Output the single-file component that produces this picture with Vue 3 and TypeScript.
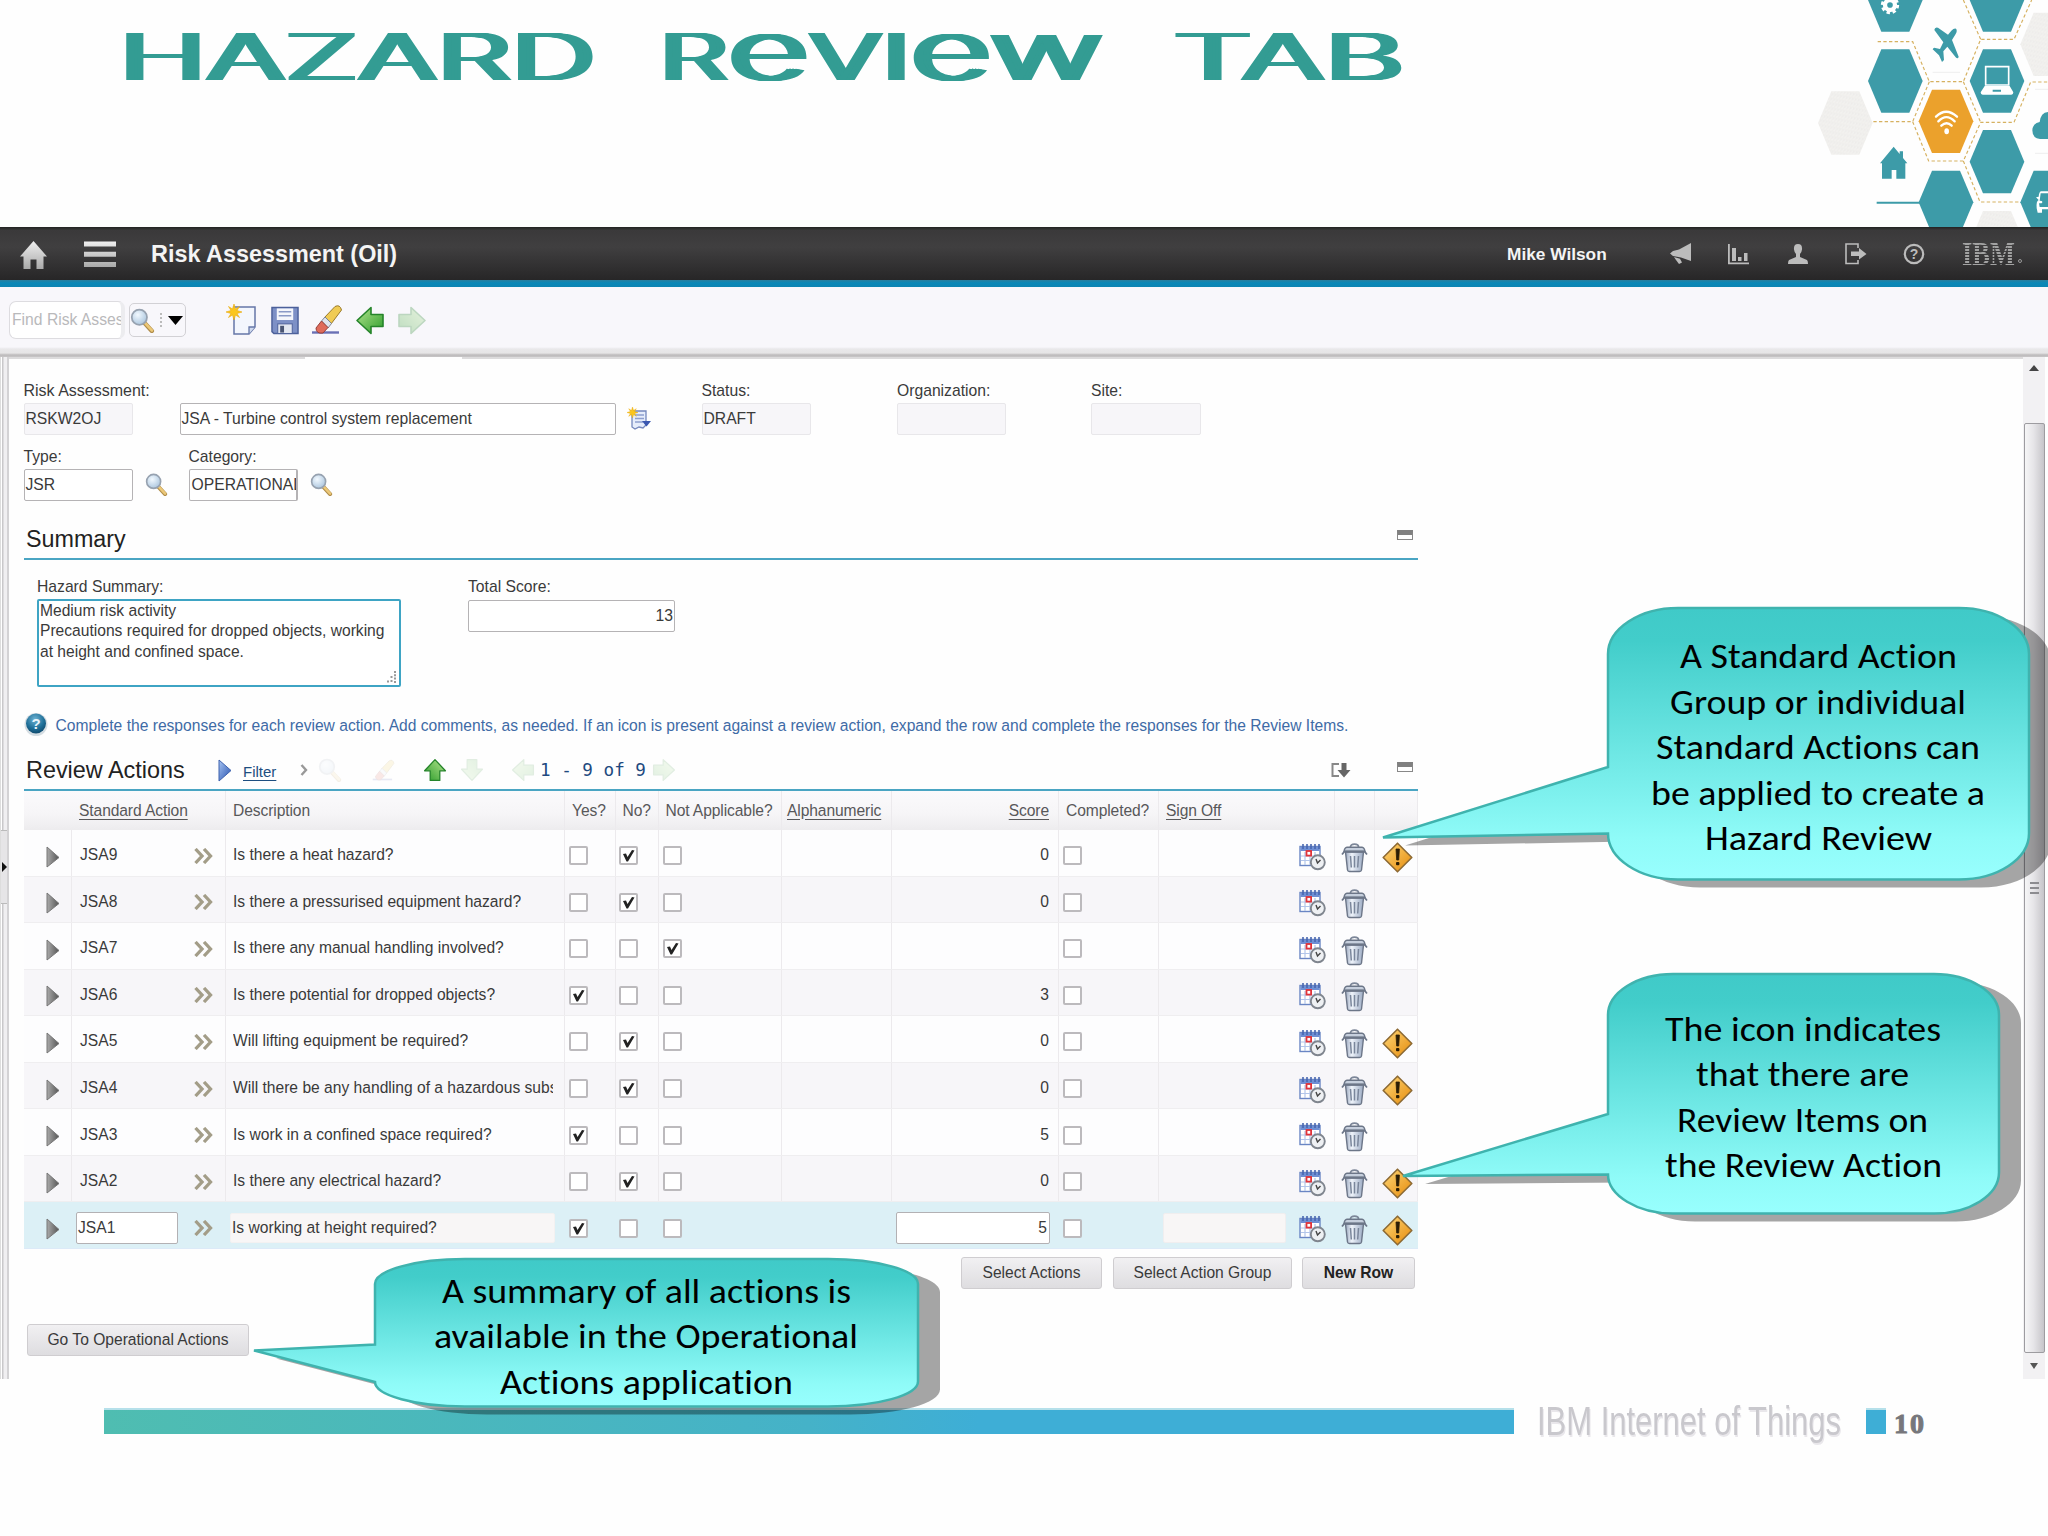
<script setup lang="ts">
interface Row {
  id: string
  desc: string
  answer: 'yes' | 'no' | 'na'
  score: string
  warn: boolean
  active?: boolean
}

const rows: Row[] = [
  { id: 'JSA9', desc: 'Is there a heat hazard?', answer: 'no', score: '0', warn: true },
  { id: 'JSA8', desc: 'Is there a pressurised equipment hazard?', answer: 'no', score: '0', warn: false },
  { id: 'JSA7', desc: 'Is there any manual handling involved?', answer: 'na', score: '', warn: false },
  { id: 'JSA6', desc: 'Is there potential for dropped objects?', answer: 'yes', score: '3', warn: false },
  { id: 'JSA5', desc: 'Will lifting equipment be required?', answer: 'no', score: '0', warn: true },
  { id: 'JSA4', desc: 'Will there be any handling of a hazardous substance?', answer: 'no', score: '0', warn: true },
  { id: 'JSA3', desc: 'Is work in a confined space required?', answer: 'yes', score: '5', warn: false },
  { id: 'JSA2', desc: 'Is there any electrical hazard?', answer: 'no', score: '0', warn: true },
  { id: 'JSA1', desc: 'Is working at height required?', answer: 'yes', score: '5', warn: true, active: true },
]
const answers = ['yes', 'no', 'na'] as const

function hex(cx: number, cy: number): string {
  return [[-82, 0], [-42, -95], [42, -95], [82, 0], [42, 95], [-42, 95]]
    .map(([x, y]) => `${cx + x},${cy + y}`)
    .join(' ')
}
const tealHexes = [[346, 0], [346, 243], [651, 0], [651, 243], [651, 485], [498, 607], [803, 607]]
const paleHexes = [[196, 369], [803, 133], [651, 728]]

interface Line { t: string; x: number; w: number; y: number }
interface Callout {
  l: number; r: number; t: number; b: number; rx: number; ry: number
  tail: [number, number, number, number]
  lines: Line[]
}
const callouts: Callout[] = [
  {
    l: 1608, r: 2029, t: 608, b: 879.5, rx: 70, ry: 46, tail: [767, 1383, 837.5, 833.5],
    lines: [
      { t: 'A Standard Action', x: 1680, w: 277, y: 668 },
      { t: 'Group or individual', x: 1670, w: 296, y: 713.5 },
      { t: 'Standard Actions can', x: 1656, w: 324, y: 759 },
      { t: 'be applied to create a', x: 1651, w: 334, y: 804.5 },
      { t: 'Hazard Review', x: 1705, w: 227, y: 850 },
    ],
  },
  {
    l: 1608, r: 1999, t: 974, b: 1213.5, rx: 65, ry: 41, tail: [1114, 1403, 1176, 1174.5],
    lines: [
      { t: 'The icon indicates', x: 1665, w: 276, y: 1040.5 },
      { t: 'that there are', x: 1696, w: 213, y: 1086 },
      { t: 'Review Items on', x: 1677, w: 251, y: 1131.5 },
      { t: 'the Review Action', x: 1665, w: 277, y: 1177 },
    ],
  },
  {
    l: 375, r: 918, t: 1259, b: 1406.5, rx: 90, ry: 25, tail: [1344.5, 254, 1350.5, 1382],
    lines: [
      { t: 'A summary of all actions is', x: 442, w: 409, y: 1302.5 },
      { t: 'available in the Operational', x: 434, w: 424, y: 1348 },
      { t: 'Actions application', x: 500, w: 293, y: 1394 },
    ],
  },
]

/* Rounded box outline with a pointed tail on its left edge. */
function bubble(c: Callout): string {
  const [y1, tx, ty, y2] = c.tail
  const kx = c.rx * 0.45
  const ky = c.ry * 0.45
  const low = Math.max(y2, c.b - c.ry)
  return `M${c.l} ${c.t + c.ry}C${c.l} ${c.t + ky} ${c.l + kx} ${c.t} ${c.l + c.rx} ${c.t}`
    + `H${c.r - c.rx}C${c.r - kx} ${c.t} ${c.r} ${c.t + ky} ${c.r} ${c.t + c.ry}`
    + `V${c.b - c.ry}C${c.r} ${c.b - ky} ${c.r - kx} ${c.b} ${c.r - c.rx} ${c.b}`
    + `H${c.l + c.rx}C${c.l + kx} ${c.b} ${c.l} ${c.b - ky} ${c.l} ${low}`
    + `L${c.l} ${y2}L${tx} ${ty}L${c.l} ${y1}Z`
}
</script>

<template>
  <div class="slide">
    <svg class="defs" width="0" height="0">
      <defs>
        <linearGradient id="gGreen" x1="0" y1="0" x2="1" y2="1"><stop offset="0" stop-color="#b5e58f" /><stop offset="1" stop-color="#2c9c2a" /></linearGradient>
        <linearGradient id="gSteel" x1="0" y1="0" x2="1" y2="0"><stop offset="0" stop-color="#9aa7be" /><stop offset=".35" stop-color="#eef3fa" /><stop offset="1" stop-color="#9aa9c2" /></linearGradient>
        <linearGradient id="gAmber" x1="0" y1="0" x2="1" y2="1"><stop offset="0" stop-color="#ffd879" /><stop offset="1" stop-color="#e58a0a" /></linearGradient>
        <linearGradient id="gGrey" x1="0" y1="0" x2="1" y2="0"><stop offset="0" stop-color="#aaa" /><stop offset="1" stop-color="#555" /></linearGradient>
        <linearGradient id="gBlue" x1="0" y1="0" x2="1" y2="1"><stop offset="0" stop-color="#a9c6f3" /><stop offset="1" stop-color="#234fae" /></linearGradient>
        <linearGradient id="gSilver" x1="0" y1="0" x2="0" y2="1"><stop offset="0" stop-color="#efefef" /><stop offset="1" stop-color="#a9a9a9" /></linearGradient>
        <linearGradient id="gCall" x1="0" y1="0" x2="0" y2="1"><stop offset="0" stop-color="#40cac8" /><stop offset=".12" stop-color="#42cdca" /><stop offset=".85" stop-color="#8ffbf8" /><stop offset="1" stop-color="#98fffe" /></linearGradient>
        <radialGradient id="gLens" cx=".4" cy=".35" r=".7"><stop offset="0" stop-color="#f2f9ff" /><stop offset="1" stop-color="#a9c4dd" /></radialGradient>
        <radialGradient id="gHelp" cx=".45" cy=".3" r=".75"><stop offset="0" stop-color="#6fb4d4" /><stop offset=".6" stop-color="#1f6f98" /><stop offset="1" stop-color="#0d4466" /></radialGradient>
        <pattern id="pGrain" width="9" height="14" patternUnits="userSpaceOnUse" patternTransform="rotate(12)"><rect width="9" height="14" fill="#f3f2f0" /><path d="M2 0l2 7-2 7M7 2l-1 8" stroke="#e6e4e1" stroke-width="1.3" fill="none" /></pattern>
      </defs>
      <symbol id="lens" viewBox="0 0 24 24">
        <path d="M14 14.500L21 22" stroke="#b08d4b" stroke-width="4.200" stroke-linecap="round" />
        <path d="M14.500 14.500L21 21.500" stroke="#ecc878" stroke-width="2.600" stroke-linecap="round" />
        <circle cx="9" cy="8.800" r="7.300" fill="url(#gLens)" stroke="#97a2b0" stroke-width="1.700" />
      </symbol>
      <symbol id="arrowL" viewBox="0 0 30 30">
        <path d="M2 15L16 2V9H28V21H16V28Z" fill="url(#gGreen)" stroke="#25842a" stroke-width="1.600" stroke-linejoin="round" />
      </symbol>
      <symbol id="eraser" viewBox="0 0 32 32">
        <path d="M1 28.500H28" stroke="#6a70b5" stroke-width="2.400" />
        <path d="M13 14L24 2.500Q29 0 30.500 6L20 20Z" fill="#f0cb55" stroke="#9a7a2c" stroke-width="1" />
        <path d="M10.500 17L14 13L20.500 19.500L17 24Z" fill="#dfe4ee" stroke="#7d8595" stroke-width="1" />
        <path d="M5 24L10.500 17L17 23.500L12 29Q5 30 5 24Z" fill="#df6b5b" stroke="#96403a" stroke-width="1" />
      </symbol>
      <symbol id="calendar" viewBox="0 0 27 28">
        <rect x="1" y="3.500" width="20" height="19" fill="#fff" stroke="#6a86c4" stroke-width="1.400" />
        <path d="M1.500 4H20.500V8H1.500Z" fill="#6f8fd4" />
        <path d="M4 1V6M8 1V6M12 1V6M16 1V6M20 1V6" stroke="#4766b0" stroke-width="1.600" />
        <path d="M2 13H20M2 17.500H20M6 9V22M11 9V22M16 9V22" stroke="#b3c6ea" stroke-width="1.200" />
        <rect x="7.500" y="8" width="4.600" height="4.600" fill="#fff" stroke="#e0343a" stroke-width="1.800" />
        <circle cx="18.800" cy="19.300" r="7" fill="#eef0f3" stroke="#7f858e" stroke-width="1.900" />
        <path d="M17 16L18.500 20L21.500 17" stroke="#444" stroke-width="1.400" fill="none" />
      </symbol>
      <symbol id="trash" viewBox="0 0 27 30">
        <path d="M9.500 4Q9.500 1.200 13.500 1.200T17.500 4" fill="none" stroke="#7d8799" stroke-width="1.800" />
        <path d="M4.500 9H22.500L20.500 27Q20.300 28.500 18.500 28.500H8.500Q6.700 28.500 6.500 27Z" fill="url(#gSteel)" stroke="#6c7688" stroke-width="1.400" />
        <path d="M3 8.500Q3.500 4.500 6 4.200H21Q23.500 4.500 24 8.500Z" fill="#c6cfdd" stroke="#6c7688" stroke-width="1.400" />
        <path d="M1 11.500L3.500 8.500H23.500L26 11.500" fill="none" stroke="#6c7688" stroke-width="1.800" />
        <path d="M9.500 13L10.300 24.500M13.500 13V24.500M17.500 13L16.700 24.500" stroke="#7a869b" stroke-width="1.500" />
      </symbol>
      <symbol id="warn" viewBox="0 0 31 31">
        <path d="M15.500 1.200L29.800 15.500L15.500 29.800L1.200 15.500Z" fill="url(#gAmber)" stroke="#8d6a34" stroke-width="1.600" stroke-linejoin="round" />
        <path d="M14 7H17.400L16.700 18H14.700Z" fill="#2b1d05" stroke="#2b1d05" stroke-width=".8" /><rect x="14" y="20" width="3.400" height="3.300" rx="1" fill="#2b1d05" />
      </symbol>
      <symbol id="star" viewBox="0 0 16 16"><path d="M8 0L9.500 5L13.500 2.500L11 6.500L16 8L11 9.500L13.500 13.500L9.500 11L8 16L6.500 11L2.500 13.500L5 9.500L0 8L5 6.500L2.500 2.500L6.500 5Z" fill="#fbc61d" stroke="#e9a90c" stroke-width=".6" /></symbol>
    </svg>

    <header class="banner">
      <svg class="title" width="1440" height="110" viewBox="0 0 1440 110">
        <text x="115" y="80" textLength="476" lengthAdjust="spacingAndGlyphs">HAZARD</text>
        <text x="655" y="80" textLength="444" lengthAdjust="spacingAndGlyphs">R<tspan class="tall">e</tspan>VI<tspan class="tall">ew</tspan></text>
        <text x="1169" y="80" textLength="231" lengthAdjust="spacingAndGlyphs">TAB</text>
      </svg>
      <svg class="hexes" width="268" height="227" viewBox="0 0 804 681">
        <polygon v-for="(h, i) in paleHexes" :key="'p' + i" :points="hex(h[0], h[1])" fill="url(#pGrain)" />
        <path d="M458 217H540M765 268H804M765 460H804" stroke="#eee" stroke-width="3" />
        <polygon v-for="(h, i) in tealHexes" :key="i" :points="hex(h[0], h[1])" fill="#3d9ba8" />
        <polygon :points="hex(498, 364)" fill="#eba12c" />
        <g fill="none" stroke="#d6b160" stroke-width="3.500" stroke-dasharray="10 7">
          <path d="M293 125H398L448 245H550L602 118H702L755 0" />
          <path d="M550 0L602 118M448 245L398 365H275" />
          <path d="M398 365L446 483H550L602 367H702L752 246H804" />
          <path d="M550 245L602 367M550 483L600 606H722" />
        </g>
        <path d="M290 608H420" stroke="#3d9ba8" stroke-width="6" />
        <circle cx="330" cy="15" r="15" fill="none" stroke="#fff" stroke-width="13" />
        <circle cx="330" cy="15" r="23" fill="none" stroke="#fff" stroke-width="9" stroke-dasharray="10 8.060" />
        <path d="M528 86Q533 92 527 102L516 120L536 170Q534 178 527 172L502 140L490 154L492 180L486 186L477 166L458 148Q460 142 466 144L480 147L490 127L463 90Q464 80 474 83L504 104L514 92Q522 84 528 86Z" fill="#3d9ba8" />
        <path d="M617 200H686V255H617Z" fill="none" stroke="#fff" stroke-width="5" />
        <path d="M614 258H689L700 277Q700 284 694 284H608Q602 284 602 277ZM638 269V275H663V269Z" fill="#fff" fill-rule="evenodd" />
        <g fill="none" stroke="#fff" stroke-width="7" stroke-linecap="round">
          <path d="M468 350Q498 320 531 350" /><path d="M475 364Q499 339 524 364" /><path d="M484 377Q500 362 515 377" />
        </g>
        <ellipse cx="500" cy="394" rx="7" ry="9" fill="#fff" />
        <path d="M300 490L341 440L359 462V454H369V474L382 490H376V536H349V510H335V536H306V490Z" fill="#3d9ba8" />
        <path d="M804 336Q782 338 779 366Q758 370 757 391Q758 416 780 417H804Z" fill="#3d9ba8" />
        <path d="M804 574H783Q777 576 776 590L768 592L776 600Q768 603 770 625L773 638H786V628H804V621H779L777 610H785Q790 606 785 603L779 602L782 580H804Z" fill="#fff" />
      </svg>
    </header>

    <nav class="topbar">
      <svg class="home" width="27" height="29" viewBox="0 0 27 29"><path d="M13.500 0L27 15.500H23.500V28H16.500V18.500H10.500V28H3.500V15.500H0Z" fill="url(#gSilver)" /></svg>
      <svg class="burger" width="32" height="27" viewBox="0 0 32 27"><path d="M0 .5H32V5.500H0ZM0 10.700H32V15.700H0ZM0 21H32V26H0Z" fill="url(#gSilver)" /></svg>
      <span class="app">Risk Assessment (Oil)</span>
      <span class="user">Mike Wilson</span>
      <div class="navicons">
        <svg width="22" height="22" viewBox="0 0 22 22" fill="#bcbcbc"><path d="M21 0V18L11 14.500L3 13L0 10.500L3 8L9 6.500ZM4 14L10 15.800L12 19.500L9 21L6 17Z" /></svg>
        <svg width="22" height="22" viewBox="0 0 22 22" fill="#bcbcbc"><path d="M0 1H1.800V19.500H21V21.200H0ZM4 5H8V18H4ZM10 14H13.500V18H10ZM16 10H19.500V18H16Z" /></svg>
        <svg width="22" height="22" viewBox="0 0 22 22" fill="#bcbcbc"><path d="M11 1Q15.500 1 15 6.500Q14.500 10 13 11V14L20 17Q21 18 21 21H1Q1 18 2 17L9 14V11Q7.500 10 7 6.500Q6.500 1 11 1Z" /></svg>
        <svg width="22" height="22" viewBox="0 0 22 22"><path d="M13 5V1H1V20.500H13V17" fill="none" stroke="#bcbcbc" stroke-width="1.600" /><path d="M6 8.500H14V5L21.500 11L14 16.500V13H6Z" fill="#bcbcbc" /></svg>
        <svg width="22" height="22" viewBox="0 0 22 22"><circle cx="11" cy="11" r="9.200" fill="none" stroke="#bcbcbc" stroke-width="2.200" /><text x="11" y="16" text-anchor="middle" class="q">?</text></svg>
      </div>
      <span class="ibm">IBM</span><i class="dot"></i>
    </nav>

    <div class="toolbar">
      <div class="find">Find Risk Assessment</div>
      <div class="findbtn">
        <svg width="25" height="25"><use href="#lens" /></svg>
        <i class="grip"></i>
        <svg width="15" height="9" viewBox="0 0 15 9"><path d="M0 0H15L7.500 9Z" /></svg>
      </div>
      <svg class="t1" width="32" height="32" viewBox="0 0 32 32"><path d="M8 3H29V23L23 30H8Z" fill="#f3f6fd" stroke="#6677a8" stroke-width="1.500" /><path d="M29 23H23V30" fill="#cfd9ee" stroke="#6677a8" stroke-width="1.300" /><use href="#star" x="0" y="0" width="16" height="16" /></svg>
      <svg class="t2" width="28" height="29" viewBox="0 0 29 29"><path d="M1 1H28V28H3L1 26Z" fill="#7d90c6" stroke="#4c609a" stroke-width="1.500" /><rect x="6" y="2" width="17" height="12" fill="#f4f6fb" /><path d="M8 5.500H21M8 9.500H21" stroke="#8a9ac6" stroke-width="1.600" /><rect x="7" y="18" width="15" height="10" fill="#e3e7f1" stroke="#4c609a" /><rect x="9.500" y="20" width="4" height="7" fill="#4a5573" /></svg>
      <svg class="t3" width="32" height="32"><use href="#eraser" /></svg>
      <svg class="t4" width="30" height="31"><use href="#arrowL" /></svg>
      <svg class="t5" width="30" height="31"><use href="#arrowL" /></svg>
    </div>

    <div class="workspace">
      <div class="gutter"><div class="handle"><i></i></div></div>
      <main class="main">
        <div class="tabline"><i></i><i></i></div>
        <div class="form">
          <div class="fld w109"><label class="wide">Risk Assessment:</label><div class="in ro">RSKW2OJ</div></div>
          <div class="fld wdesc"><label></label><div class="in">JSA - Turbine control system replacement</div></div>
          <svg class="longdesc" width="25" height="24" viewBox="0 0 25 24"><path d="M5 4H19V18L16 21L12 20L8 22L5 20Z" fill="#e6edfb" stroke="#7588bd" stroke-width="1.300" /><path d="M8 8H17M8 11.500H17M8 15H16" stroke="#8ea0cf" stroke-width="1.300" /><path d="M15 14H24L19.500 19.500Z" fill="#3a57b0" /><use href="#star" width="11" height="11" /></svg>
          <div class="fld wst"><label>Status:</label><div class="in ro">DRAFT</div></div>
          <div class="fld worg"><label>Organization:</label><div class="in ro"></div></div>
          <div class="fld wsite"><label>Site:</label><div class="in ro"></div></div>
        </div>
        <div class="form second">
          <div class="fld w109"><label>Type:</label><div class="in">JSR</div></div>
          <svg class="lk" width="23" height="23"><use href="#lens" /></svg>
          <div class="fld wcat"><label>Category:</label><div class="in">OPERATIONAL</div></div>
          <svg class="lk" width="23" height="23"><use href="#lens" /></svg>
        </div>

        <div class="sechead"><h2>Summary</h2><i class="collapse"></i></div>
        <div class="summary">
          <div class="hz"><label>Hazard Summary:</label>
            <div class="area">Medium risk activity<br>Precautions required for dropped objects, working<br>at height and confined space.
              <svg class="resize" width="12" height="12" viewBox="0 0 12 12" fill="#999"><path d="M9 0h2v2h-2zM9 3.300h2v2h-2zM5.500 5h2v2h-2zM9 6.600h2v2h-2zM5.500 9h2v2h-2zM9 10h2v2h-2zM2 9.500h2v2h-2z" /></svg>
            </div>
          </div>
          <div class="ts"><label>Total Score:</label><div class="in right">13</div></div>
        </div>
        <div class="help">
          <svg width="24" height="24" viewBox="0 0 24 24"><circle cx="12" cy="12.500" r="11.500" fill="#b9c6cf" opacity=".6" /><circle cx="12" cy="11.500" r="10" fill="url(#gHelp)" /><text x="12" y="17" text-anchor="middle" class="hq">?</text></svg>
          <span>Complete the responses for each review action. Add comments, as needed. If an icon is present against a review action, expand the row and complete the responses for the Review Items.</span>
        </div>

        <div class="sechead rev">
          <h2>Review Actions</h2>
          <svg class="r1" width="14" height="23" viewBox="0 0 14 23"><path d="M1 1L13 11.500L1 22Z" fill="url(#gBlue)" stroke="#3e62ae" /></svg>
          <a>Filter</a>
          <svg class="r2" width="8" height="12" viewBox="0 0 8 12"><path d="M1.500 1L6 6L1.500 11" fill="none" stroke="#999" stroke-width="2.400" /></svg>
          <svg class="r3" width="24" height="24"><use href="#lens" /></svg>
          <svg class="r4" width="23" height="23"><use href="#eraser" /></svg>
          <svg class="r5" width="24" height="24"><use href="#arrowL" /></svg>
          <svg class="r6" width="24" height="24"><use href="#arrowL" /></svg>
          <svg class="r7" width="24" height="24"><use href="#arrowL" /></svg>
          <span class="pager">1 - 9 of 9</span>
          <svg class="r8" width="24" height="24"><use href="#arrowL" /></svg>
          <svg class="dl" width="20" height="17" viewBox="0 0 20 17"><path d="M8 2H1.500V14H8" fill="none" stroke="#888" stroke-width="2" /><path d="M10.500 1H15.500V8H19.500L13 15.500L6.500 8H10.500Z" fill="#666" /></svg>
          <i class="collapse"></i>
        </div>

        <div class="grid head">
          <span></span><span class="u">Standard Action</span><span></span><span>Description</span><span>Yes?</span><span>No?</span><span>Not Applicable?</span><span class="u">Alphanumeric</span><span class="u num">Score</span><span>Completed?</span><span class="u">Sign Off</span><span></span><span></span>
        </div>
        <div v-for="r in rows" :key="r.id" class="grid row" :class="{ on: r.active }">
          <span class="exp"><svg width="14" height="22" viewBox="0 0 14 22"><path d="M1 1L13 11.500L1 21Z" fill="url(#gGrey)" stroke="#777" /></svg></span>
          <span class="id"><b :class="{ box: r.active }">{{ r.id }}</b></span>
          <span class="chev"><svg width="19" height="16" viewBox="0 0 19 16"><path d="M1.500 1L8 8L1.500 15M10 1L16.500 8L10 15" fill="none" stroke="#a39d88" stroke-width="3.300" /></svg></span>
          <span class="desc"><b :class="{ box: r.active }">{{ r.desc }}</b></span>
          <span v-for="a in answers" :key="a" class="ck"><i class="cb"><svg v-if="r.answer === a" width="13" height="13" viewBox="0 0 13 13"><path d="M1 5L4 4.500L5.500 8L10 1L12.500 1.500L6 12.500H4.500Z" fill="#222" /></svg></i></span>
          <span></span>
          <span class="num"><b :class="{ box: r.active }">{{ r.score }}</b></span>
          <span class="ck"><i class="cb"></i></span>
          <span class="sign"><b v-if="r.active" class="box"></b><svg width="27" height="28"><use href="#calendar" /></svg></span>
          <span class="ic"><svg width="27" height="30"><use href="#trash" /></svg></span>
          <span class="ic last"><svg v-if="r.warn" width="31" height="31"><use href="#warn" /></svg></span>
        </div>
        <div class="actions">
          <button class="b1">Select Actions</button><button class="b2">Select Action Group</button><button class="b3">New Row</button>
        </div>
        <button class="go">Go To Operational Actions</button>
      </main>
      <div class="scroll">
        <svg width="10" height="6" viewBox="0 0 10 6"><path d="M0 6L5 0L10 6Z" fill="#444" /></svg>
        <div class="thumb"><i></i><i></i><i></i></div>
        <svg width="8" height="6" viewBox="0 0 8 6"><path d="M0 0H8L4 6Z" fill="#555" /></svg>
      </div>
    </div>

    <footer class="foot">
      <div class="bar"></div>
      <svg class="iot" width="306" height="50" viewBox="0 0 306 50">
        <text x="2" y="36" textLength="304" lengthAdjust="spacingAndGlyphs">IBM Internet of Things</text>
      </svg>
      <i class="sq"></i><span class="pg">10</span>
    </footer>

    <svg class="overlay" width="2048" height="1536" viewBox="0 0 2048 1536">
      <g v-for="(c, i) in callouts" :key="i">
        <path :d="bubble(c)" transform="translate(22 8)" fill="#000" opacity=".35" />
        <path :d="bubble(c)" fill="url(#gCall)" stroke="#3fb3ae" stroke-width="2.500" />
        <text v-for="l in c.lines" :key="l.t" :x="l.x" :y="l.y" :textLength="l.w" lengthAdjust="spacingAndGlyphs">{{ l.t }}</text>
      </g>
    </svg>
  </div>
</template>

<style>
html, body { margin: 0; background: #fefefe; overflow: hidden; }
</style>

<style scoped>
.slide { position: relative; width: 2048px; height: 1536px; overflow: hidden; background: #fefefe; font-family: "Liberation Sans", Arial, sans-serif; font-size: 15.700px; color: #3a3a3a; }
.slide * { box-sizing: border-box; }
svg { display: block; flex: none; }
.defs { position: absolute; }
.banner { display: flex; height: 227px; justify-content: space-between; }
/* The stacked sideways shadows widen only the upright strokes of the letters. */
.title { filter: drop-shadow(3px 0 0 #339c93) drop-shadow(3px 0 0 #339c93) drop-shadow(3px 0 0 #339c93); }
.title text { font-family: Inter, sans-serif; font-weight: 300; font-size: 64px; fill: #339c93; }
.title .tall { font-size: 83px; }
.topbar { display: flex; align-items: center; height: 60px; padding-bottom: 7px; background: linear-gradient(#222 0, #3a393a 3px, #403f40 20px, #272627 53px, #2a7f9e 53px, #0a88b8 56px, #0d84b2 60px); }
.home { margin-left: 20px; margin-top: 3px; }
.burger { margin-left: 37px; margin-top: 1px; }
.app { margin-left: 35px; margin-top: 1px; color: #f4f4f4; font-weight: 700; font-size: 23.400px; width: 1356px; }
.user { color: #f4f4f4; font-weight: 700; font-size: 17.300px; width: 163px; white-space: nowrap; margin-top: 1px; }
.navicons { display: flex; gap: 36.300px; }
.q { font: 700 14px "Liberation Sans", sans-serif; fill: #bcbcbc; }
.ibm { margin-left: 37px; height: 22px; font: 700 33px/23px "Liberation Serif", serif; transform: scaleX(.8); transform-origin: 0 0; background: repeating-linear-gradient(#a2a2a2 0 2px, transparent 2px 3px); background-clip: text; -webkit-background-clip: text; color: transparent; width: 66px; }
.dot { width: 4px; height: 4px; border: 1px solid #999; border-radius: 2px; margin: 15px 0 0 -10px; }
.toolbar { display: flex; align-items: center; height: 70px; background: linear-gradient(#f8f7fb 0 60px, #e9e8ea 62px, #e6e5e6 66px, #bcbabb 68px, #c8c6c7 70px); padding-bottom: 4px; }
.find { margin-left: 9px; width: 116px; height: 38px; border: 1.500px solid #dddce0; border-radius: 7px; background: #fff; color: #b9b9bb; line-height: 35px; padding-left: 2px; white-space: nowrap; overflow: hidden; border-right-width: 4px; border-right-color: #ececef; }
.findbtn { margin-left: 4px; width: 57px; height: 34px; border: 1.500px solid #d2d1d5; border-radius: 5px; display: flex; align-items: center; }
.grip { width: 2px; height: 14px; background: repeating-linear-gradient(#bbb 0 2px, transparent 2px 4px); margin: 0 6px 0 5px; }
.t1 { margin-left: 40px; } .t2 { margin-left: 13px; } .t3 { margin-left: 12px; } .t4 { margin-left: 12px; } .t5 { margin-left: 12px; transform: scaleX(-1); opacity: .28; }
.workspace { display: flex; height: 1022px; }
.gutter { width: 9px; flex: none; border-left: 1px solid #ddd; border-right: 2px solid #d3d2d4; background: linear-gradient(90deg, #fff 0 1px, #c9c8ca 1px 2px, #f0eff1 3px); padding-top: 473px; }
.handle { height: 74px; border: 1px solid #bbb; border-width: 1px 0; background: #e6e5e7; display: flex; align-items: center; justify-content: flex-end; }
.handle i { border: 5px solid transparent; border-left: 5px solid #111; border-right: 0; }
.main { flex: 1; display: flex; flex-direction: column; align-items: flex-start; padding-left: 15px; }
.tabline { display: flex; gap: 157px; width: 2014px; height: 2px; margin-left: -15px; flex: none; }
.tabline i { background: #dcdbdc; width: 296px; } .tabline i:last-child { flex: 1; }
.form { display: flex; height: 57px; margin: 19px 0 0 -0.500px; align-items: flex-end; }
.second { margin-top: 9px; }
label { display: block; height: 25px; line-height: 25px; white-space: nowrap; }
.wide { font-size: 16px; }
.in { height: 32px; border: 1.500px solid #b5b3b5; border-radius: 2px; background: #fff; line-height: 30px; padding: 0 1px; white-space: nowrap; overflow: hidden; }
.ro { background: #f7f6f9; border-color: #e8e7ea; }
.w109 { width: 109px; } .wdesc { width: 436px; margin-left: 47px; } .wst { width: 109px; margin-left: 50px; }
.worg { width: 109px; margin-left: 86.500px; } .wsite { width: 110px; margin-left: 85px; }
.longdesc { margin: 0 0 4px 11px; }
.wcat { width: 109px; margin-left: 21px; } .wcat .in { padding-left: 2px; border-right-width: 2px; }
.lk { margin: 0 0 5px 12px; }
.sechead { width: 1394px; height: 40px; margin-top: 19px; display: flex; align-items: center; border-bottom: 2px solid #4aa5c3; flex: none; }
h2 { margin: 0; font-weight: 400; font-size: 23.300px; color: #222; padding-left: 2px; white-space: nowrap; }
.collapse { width: 16px; height: 10px; border: 1.500px solid #888; border-top: 5px solid #808080; margin-left: auto; margin-right: 5px; margin-bottom: 9px; }
.summary { display: flex; padding: 15px 0 0 13px; height: 128px; flex: none; }
.hz { width: 364px; } .hz label, .ts label { height: 24px; line-height: 24px; }
.area { position: relative; height: 88px; border: 2px solid #3ea4c4; border-radius: 2px; background: #fff; padding: 0 1px; line-height: 20.400px; white-space: nowrap; font-size: 15.620px; }
.resize { position: absolute; right: 2px; bottom: 2px; }
.ts { width: 207px; margin-left: 67px; }
.ts .in { margin-top: 1px; }
.right { text-align: right; }
.help { display: flex; align-items: center; height: 24px; margin-top: 24px; color: #3f6ba6; white-space: nowrap; flex: none; }
.help span { margin-left: 7.500px; margin-top: 3px; font-size: 15.610px; }
.hq { font: 700 15px "Liberation Sans", sans-serif; fill: #e8f4fb; }
.rev { margin-top: 15px; }
.rev h2 { width: 194px; font-size: 23.400px; }
.rev a { margin-left: 11px; width: 34px; font-size: 15px; text-decoration: underline; text-underline-offset: 3px; color: #1d4e80; margin-top: 3px; }
.r2 { margin-left: 23px; } .r3 { margin-left: 10px; opacity: .12; } .r4 { margin-left: 30px; opacity: .14; }
.r5 { margin-left: 28px; transform: rotate(90deg); } .r6 { margin-left: 13px; transform: rotate(-90deg); opacity: .13; }
.r7 { margin-left: 27px; opacity: .13; } .r8 { margin-left: 6px; opacity: .13; transform: scaleX(-1); }
.pager { margin-left: 5px; font-family: "DejaVu Sans Mono", monospace; font-size: 17.600px; color: #1f4a80; white-space: nowrap; }
.dl { margin-left: auto; } .rev .collapse { margin-left: 46px; margin-bottom: 7px; }
.grid { display: grid; grid-template-columns: 48px 110px 44px 339px 50.500px 43px 123.500px 110px 167px 100px 176px 40px 43px; width: 1394px; flex: none; }
.grid span { display: flex; align-items: center; white-space: nowrap; min-width: 0; border-right: 1.500px solid #eceaed; }
.grid span:nth-child(2) { border-right: 0; }
.head { height: 39px; background: linear-gradient(#fbfafc, #f6f5f7 60%, #edecee); font-size: 15.610px; letter-spacing: -.1px; color: #58585a; }
.head span { padding-left: 7px; }
.head span:first-child { border: 0; }
.head span:nth-child(8) { padding-left: 5px; }
.u { text-decoration: underline; text-underline-offset: 3px; }
.num { justify-content: flex-end; padding-right: 9px; }
.row { height: 46.550px; border-bottom: 1.500px solid #efeef0; font-size: 15.620px; }
.row:nth-child(odd) { background: #fdfdfe; }
.row:nth-child(even) { background: #f7f6f9; }
.row b { font-weight: 400; }
.row.on { background: #dcf0f6; border-color: #dceaf8; }
.row.on > span { border-color: transparent; }
.row > .id, .row > .desc, .row > .num { padding-top: 5px; }
.exp { padding: 8px 0 0 22px; }
.id { padding-left: 8px; }
.chev { padding: 6px 0 0 12px; }
.desc { padding-left: 7px; padding-right: 11px; } .desc b { overflow: hidden; }
.ck { padding-left: 4px; }
.row .ck:nth-child(6) { padding-left: 3px; }
.cb { width: 19px; height: 19px; border: 2px solid #bcbabd; border-radius: 2px; background: #fff; display: flex; align-items: center; justify-content: center; margin-top: 6px; }
.box { height: 32px; line-height: 29px; border: 1.500px solid #b3b1b4; background: #fff; border-radius: 2px; padding: 0 2px; }
.row.on .id { padding-left: 4px; } .id .box { width: 102px; padding: 0 1px; }
.row.on .desc { padding-left: 4px; padding-right: 9px; } .desc .box { flex: 1; background: #f8f6f6; border-color: #f3f1f1; height: 30px; line-height: 27px; padding: 0 0 0 1px; }
.row.on .num { padding-right: 8px; padding-left: 4px; } .num .box { flex: 1; text-align: right; }
.row .sign { justify-content: flex-end; padding-right: 8px; }
.row .sign svg { margin-top: 8px; }
.sign .box { width: 123px; height: 30px; background: #f8f6f6; border-color: #f0eeef; margin: 5px 13px 0 0; }
.ic { padding: 10px 0 0 6px; }
.row .last { padding-left: 7px; }
.actions { display: flex; margin: 8px 0 0 937px; flex: none; }
button { height: 32px; border: 1.500px solid #cfcdd0; border-radius: 3px; background: linear-gradient(#f1f0f2, #dedde0); font: 15.610px "Liberation Sans", Arial, sans-serif; color: #3a3a3a; padding: 0; white-space: nowrap; }
.b1 { width: 141px; } .b2 { width: 179px; margin-left: 11px; } .b3 { width: 113px; margin-left: 10px; font-weight: 700; color: #222; }
.go { width: 222px; margin: 35px 0 0 3px; flex: none; }
.scroll { width: 22px; margin-right: 3px; flex: none; background: #f2f1f3; display: flex; flex-direction: column; align-items: center; padding-top: 8px; }
.thumb { width: 21px; height: 930px; margin: 52px 0 10px; border: 1.500px solid #9d9ca0; border-radius: 2px; background: linear-gradient(90deg, #f6f6f7, #e6e5e8 45%, #c6c5c9); display: flex; flex-direction: column; align-items: center; justify-content: center; gap: 3px; }
.thumb i { width: 9px; height: 2px; background: #8c8c90; }
.foot { display: flex; align-items: flex-start; height: 157px; padding: 29px 0 0 104px; }
.bar { width: 1410px; height: 26px; background: linear-gradient(90deg, #4fbdb1, #45b2c8 50%, #3eaed6 62%); border-top: 2px solid #b5e0ea; }
.iot { margin: -9px 0 0 21px; overflow: visible; filter: drop-shadow(1.500px 2px 0 #e9e7eb); }
.iot text { font-size: 41px; fill: #c9c8cd; }
.sq { width: 20px; height: 26px; background: #3eaed6; border-top: 2px solid #b5e0ea; margin-left: 25px; }
.pg { margin: 1px 0 0 8px; font: 700 28px/30px "Liberation Serif", serif; color: #77777c; letter-spacing: 2px; -webkit-text-stroke: 1px #77777c; }
.overlay { position: absolute; left: 0; top: 0; }
.overlay text { font-family: Carlito, Lato, sans-serif; font-size: 34px; fill: #000; font-variant-ligatures: none; }
</style>
